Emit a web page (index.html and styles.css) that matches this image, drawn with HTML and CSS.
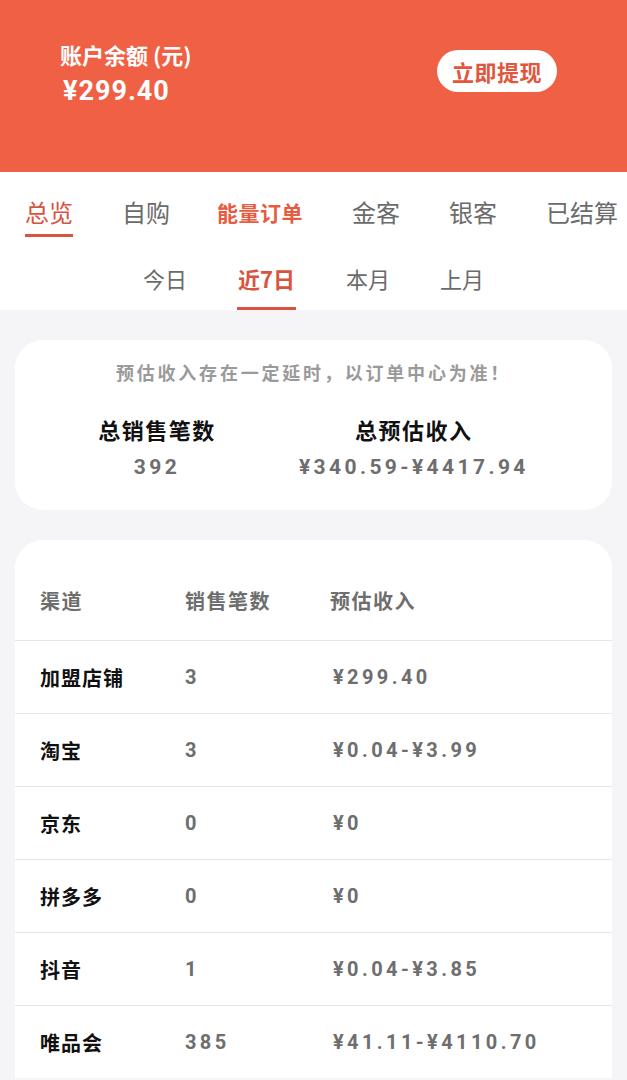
FILE: index.html
```html
<!DOCTYPE html>
<html>
<head>
    <meta charset="UTF-8">
    <title>收益</title>
    <link rel="stylesheet" href="styles.css">
</head>
<body>
    <div class="header">
        <div class="balance">
            <p class="balance-label">账户余额 (元)</p>
            <p class="balance-num">¥299.40</p>
        </div>
        <a class="btn-withdraw">立即提现</a>
    </div>

    <div class="tabs">
        <ul class="tab-main">
            <li class="active">总览</li>
            <li>自购</li>
            <li class="hot">能量订单</li>
            <li>金客</li>
            <li>银客</li>
            <li>已结算</li>
        </ul>
        <ul class="tab-date">
            <li>今日</li>
            <li class="active">近7日</li>
            <li>本月</li>
            <li>上月</li>
        </ul>
    </div>

    <div class="content">
        <div class="card summary">
            <p class="notice">预估收入存在一定延时，以订单中心为准！</p>
            <div class="stats">
                <div class="stat">
                    <p class="stat-title">总销售笔数</p>
                    <p class="stat-num">392</p>
                </div>
                <div class="stat">
                    <p class="stat-title">总预估收入</p>
                    <p class="stat-num">¥340.59-¥4417.94</p>
                </div>
            </div>
        </div>

        <div class="card table">
            <div class="row head">
                <span>渠道</span>
                <span>销售笔数</span>
                <span>预估收入</span>
            </div>
            <div class="row">
                <span class="name">加盟店铺</span>
                <span class="num">3</span>
                <span class="num">¥299.40</span>
            </div>
            <div class="row">
                <span class="name">淘宝</span>
                <span class="num">3</span>
                <span class="num">¥0.04-¥3.99</span>
            </div>
            <div class="row">
                <span class="name">京东</span>
                <span class="num">0</span>
                <span class="num">¥0</span>
            </div>
            <div class="row">
                <span class="name">拼多多</span>
                <span class="num">0</span>
                <span class="num">¥0</span>
            </div>
            <div class="row">
                <span class="name">抖音</span>
                <span class="num">1</span>
                <span class="num">¥0.04-¥3.85</span>
            </div>
            <div class="row">
                <span class="name">唯品会</span>
                <span class="num">385</span>
                <span class="num">¥41.11-¥4110.70</span>
            </div>
        </div>
    </div>
</body>
</html>
```

FILE: styles.css
```css
*{ margin: 0; padding: 0; box-sizing: border-box; }
li{ list-style: none; }
body{
    font-family: "Noto Sans CJK SC", "Noto Sans", sans-serif;
    background: #f5f5f7;
    width: 627px;
    overflow: hidden;
}

/* header */
.header{
    height: 172px;
    background: #ef6045;
    display: flex;
    justify-content: space-between;
    align-items: flex-start;
    padding: 38px 70px 0 60px;
    color: #fff;
}
.balance-label{
    font-size: 22px;
    font-weight: bold;
    line-height: 32px;
}
.balance-num{
    font-family: Roboto, "Noto Sans CJK SC", sans-serif;
    font-size: 27px;
    font-weight: bold;
    line-height: 42px;
    padding-left: 3px;
    letter-spacing: 1px;
}
.btn-withdraw{
    margin-top: 12px;
    width: 120px;
    height: 42px;
    border-radius: 21px;
    background: #fff;
    color: #e0573e;
    font-size: 22px;
    font-weight: bold;
    display: flex;
    align-items: center;
    justify-content: center;
    letter-spacing: 0.5px;
}

/* tabs */
.tabs{
    background: #fff;
    height: 138px;
}
.tab-main{
    display: flex;
    align-items: flex-start;
    gap: 49px;
    padding: 22px 0 0 25px;
    height: 73px;
    white-space: nowrap;
}
.tab-main li{
    font-size: 24px;
    line-height: 36px;
    color: #6b6b6b;
    position: relative;
}
.tab-main li.active{
    color: #d9533f;
}
.tab-main li.hot{
    color: #e65c40;
    font-weight: bold;
    font-size: 21px;
    letter-spacing: 0.5px;
    margin-left: -2px;
}
.tab-main li.active:after,
.tab-date li.active:after{
    content: "";
    position: absolute;
    left: 0;
    right: 0;
    height: 3px;
    background: #d9533f;
}
.tab-main li.active:after{ bottom: -7px; }

.tab-date{
    display: flex;
    align-items: flex-start;
    justify-content: center;
    gap: 50px;
    padding-top: 15px;
}
.tab-date li{
    font-size: 22px;
    line-height: 36px;
    color: #6b6b6b;
    position: relative;
}
.tab-date li.active{
    color: #d9533f;
    font-weight: bold;
    padding: 0 1px;
}
.tab-date li.active:after{ bottom: -14px; }

/* content */
.content{
    padding: 30px 15px 0;
}
.card{
    background: #fff;
    border-radius: 28px;
}
.summary{
    height: 170px;
    padding-top: 18px;
    margin-bottom: 30px;
}
.notice{
    text-align: center;
    color: #9a9a9a;
    font-size: 18px;
    font-weight: bold;
    letter-spacing: 2.8px;
    line-height: 28px;
}
.stats{
    display: flex;
    justify-content: space-evenly;
    margin-top: 27px;
}
.stat{
    text-align: center;
}
.stat-title{
    font-size: 22px;
    font-weight: bold;
    color: #111;
    letter-spacing: 1.5px;
    line-height: 32px;
}
.stat-num{
    font-family: Roboto, "Noto Sans CJK SC", sans-serif;
    font-size: 21px;
    font-weight: bold;
    color: #6e6e6e;
    letter-spacing: 3.4px;
    line-height: 36px;
    margin-top: 4px;
}

.table{
    border-radius: 28px 28px 0 0;
    overflow: hidden;
}
.row{
    display: flex;
    align-items: center;
    height: 73px;
    padding-left: 25px;
    border-top: 1px solid #e6e6e6;
}
.row span{
    width: 145px;
    font-size: 20px;
}
.row.head{
    height: 100px;
    padding-top: 20px;
    border-top: none;
}
.row.head span{
    color: #6e6e6e;
    font-weight: bold;
    letter-spacing: 1.5px;
}
.row .name{
    color: #111;
    font-weight: bold;
    letter-spacing: 1px;
}
.row .num{
    font-family: Roboto, "Noto Sans CJK SC", sans-serif;
    color: #6e6e6e;
    font-weight: bold;
    letter-spacing: 3.4px;
}
.row .num:last-child{
    width: auto;
    padding-left: 3px;
}
```
